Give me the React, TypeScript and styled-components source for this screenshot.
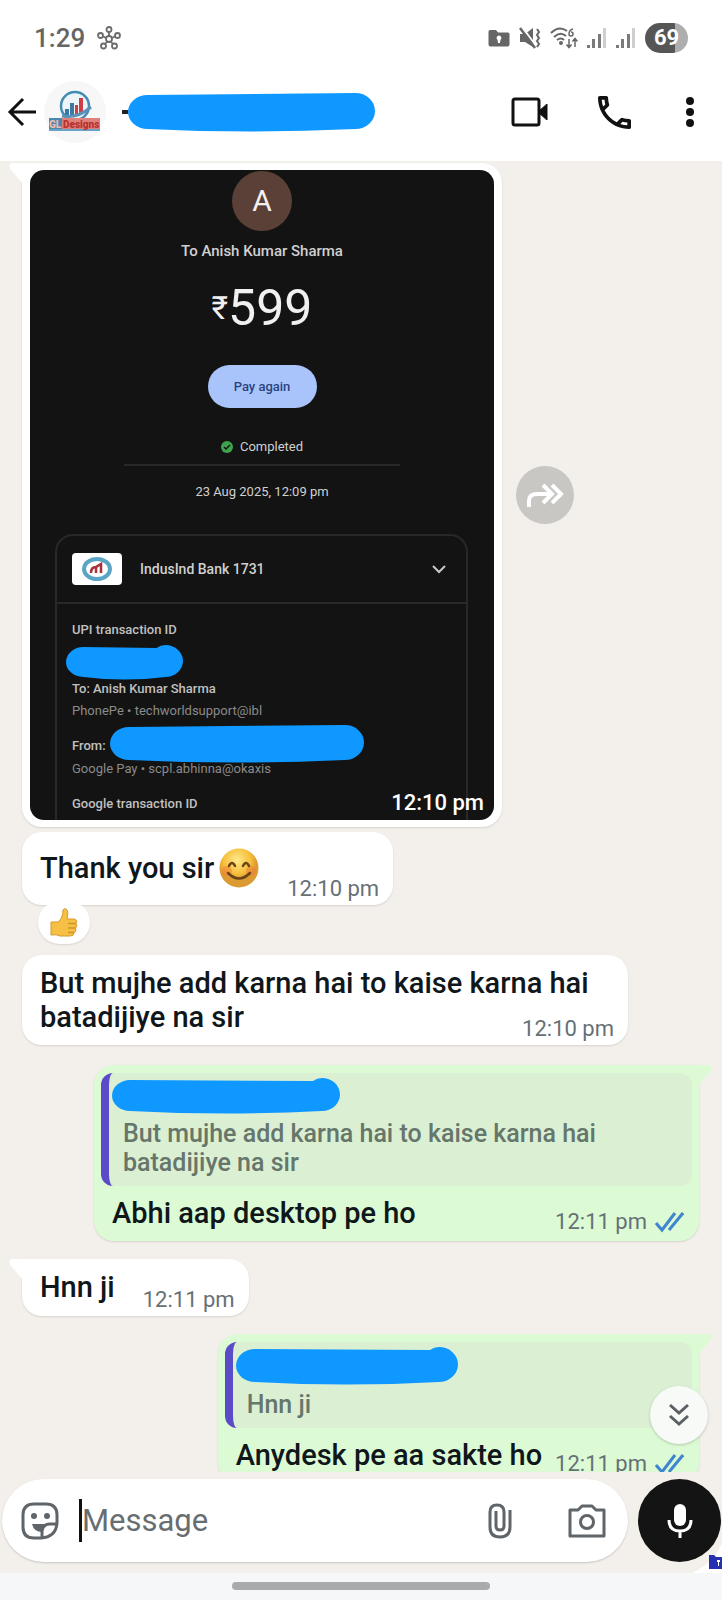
import React from 'react';
import styled, { createGlobalStyle, css } from 'styled-components';
import { MdOutlineCall } from 'react-icons/md';

const Global = createGlobalStyle`
  * { box-sizing: border-box; }
  body { margin: 0; background: #f3f0eb; font-family: Roboto, "Liberation Sans", sans-serif; }
  button, input { font: inherit; }
`;

const Screen = styled.div`
  display: flex;
  flex-direction: column;
  height: 100vh;
  overflow: hidden;
  background: #f3f0eb;
`;

const StatusBar = styled.div`
  display: flex;
  align-items: center;
  height: 75px;
  padding: 0 34px;
  background: #fff;
  color: #666;
`;

const Clock = styled.time`
  margin-right: 12px;
  font-size: 26px;
  font-weight: 500;
`;

const StatusIcons = styled.div`
  display: flex;
  align-items: center;
  gap: 9px;
  margin-left: auto;
`;

const Battery = styled.div`
  display: flex;
  align-items: center;
  justify-content: center;
  width: 43px;
  height: 30px;
  border-radius: 15px;
  background: linear-gradient(90deg, #565656 69%, #aeaeae 69%);
  color: #fff;
  font-size: 22px;
  font-weight: 700;
`;

const Header = styled.header`
  display: flex;
  align-items: center;
  height: 86px;
  padding: 0 22px 12px 6px;
  background: #fff;
  color: #111;
`;

const IconButton = styled.button`
  display: flex;
  align-items: center;
  justify-content: center;
  padding: 0;
  border: 0;
  background: none;
  color: inherit;
  cursor: pointer;
`;

const Contact = styled.div`
  display: flex;
  align-items: center;
  flex: 1;
  margin-left: 6px;
`;

const ContactName = styled.div`
  display: flex;
  align-items: center;
  margin-left: 16px;
`;

const Dash = styled.span`
  width: 6px;
  height: 4px;
  background: #222;
`;

const HeaderActions = styled.div`
  display: flex;
  align-items: center;
  gap: 49px;
`;

const ChatArea = styled.main`
  position: relative;
  flex: 1;
  min-height: 0;
  overflow: hidden;
`;

const Messages = styled.div`
  display: flex;
  flex-direction: column;
  padding: 2px 23px 0 22px;
`;

const Row = styled.div<{ $gap: number; $out?: boolean }>`
  display: flex;
  align-items: center;
  gap: 14px;
  justify-content: ${p => (p.$out ? 'flex-end' : 'flex-start')};
  margin-top: ${p => p.$gap}px;
`;

const Bubble = styled.div<{ $out?: boolean; $tail?: boolean }>`
  position: relative;
  border-radius: 20px;
  background: ${p => (p.$out ? '#dcfbd5' : '#fff')};
  box-shadow: 0 1px 2px rgba(0, 0, 0, 0.12);
  color: #10171b;
  ${p => p.$tail && css`
    border-top-${p.$out ? 'right' : 'left'}-radius: 0;
    &::before {
      content: '';
      position: absolute;
      top: 0;
      ${p.$out ? 'left' : 'right'}: 100%;
      width: 13px;
      height: 20px;
      background: inherit;
      clip-path: ${p.$out
        ? 'polygon(0 0, 80% 0, 100% 12%, 90% 30%, 0 100%)'
        : 'polygon(100% 0, 20% 0, 0 12%, 10% 30%, 100% 100%)'};
    }
  `}
`;

const MediaBubble = styled(Bubble)`
  width: 480px;
  padding: 7px 8px;
`;

const TextBubble = styled(Bubble)<{ $wide?: boolean; $tall?: boolean }>`
  display: flex;
  align-items: flex-end;
  gap: 28px;
  padding: ${p => (p.$tall ? 16 : 11)}px 14px 3px 18px;
  ${p => p.$wide && css`width: 606px;`}
`;

const ReplyBubble = styled(Bubble)<{ $wide?: boolean }>`
  padding: 8px 7px 6px;
  ${p => p.$wide && css`width: 605px;`}
`;

const Body = styled.p<{ $below: number }>`
  display: flex;
  align-items: center;
  gap: 5px;
  margin: 0;
  padding-bottom: ${p => p.$below}px;
  font-size: 29px;
  font-weight: 500;
  line-height: 34px;
`;

const WrappedBody = styled(Body)`
  display: flow-root;
  flex: 1;
`;

const Stamp = styled.span<{ $light?: boolean }>`
  display: flex;
  align-items: center;
  gap: 8px;
  color: ${p => (p.$light ? '#fff' : '#667075')};
  font-size: 22px;
  font-weight: ${p => (p.$light ? 500 : 400)};
  line-height: 26px;
  white-space: nowrap;
`;

const FloatStamp = styled(Stamp)`
  float: right;
  margin-top: 16px;
`;

const ReplyFooter = styled.div`
  display: flex;
  align-items: flex-end;
  justify-content: space-between;
  gap: 13px;
  padding: 10px 8px 0 11px;
`;

const Quote = styled.blockquote`
  margin: 0;
  padding: 5px 20px 9px 14px;
  border-left: 8px solid #5a4bc8;
  border-radius: 12px;
  background: #dbf0d3;
  color: #66766b;
  font-size: 25px;
  font-weight: 500;
  line-height: 29px;
`;

const QuoteText = styled.p`
  margin: 5px 0 0;
`;

const Redaction = styled.svg`
  display: block;
  flex: none;
  fill: #0f98ff;
`;

const QuoteName = styled.div`
  margin-left: -11px;
`;

const Reaction = styled.span`
  display: flex;
  align-items: center;
  justify-content: center;
  z-index: 1;
  width: 52px;
  height: 43px;
  margin: -4px 0 0 16px;
  border-radius: 22px;
  background: #fff;
  box-shadow: 0 1px 2px rgba(0, 0, 0, 0.12);
`;

const Receipt = styled.section`
  position: relative;
  display: flex;
  flex-direction: column;
  align-items: center;
  height: 650px;
  overflow: hidden;
  border-radius: 14px;
  background: #131313;
  color: #d0d0d0;
  font-size: 13px;
  line-height: 18px;
`;

const Payee = styled.div`
  display: flex;
  align-items: center;
  justify-content: center;
  flex: none;
  width: 60px;
  height: 60px;
  margin-top: 1px;
  border-radius: 50%;
  background: #5b4037;
  color: #f5f0ee;
  font-size: 30px;
`;

const PayeeName = styled.div`
  margin-top: 11px;
  font-size: 15px;
  font-weight: 500;
`;

const Amount = styled.div`
  display: flex;
  align-items: center;
  margin-top: 24px;
  color: #f0f0f0;
  font-size: 50px;
  line-height: 48px;
`;

const Rupee = styled.span`
  font-size: 32px;
`;

const PayAgain = styled.button`
  flex: none;
  width: 109px;
  height: 43px;
  margin-top: 33px;
  padding: 0;
  border: 0;
  border-radius: 22px;
  background: #a9c4fb;
  color: #29437f;
  font-size: 13px;
  font-weight: 500;
`;

const Completed = styled.div`
  display: flex;
  align-items: center;
  gap: 7px;
  width: 276px;
  justify-content: center;
  margin-top: 30px;
  padding-bottom: 8px;
  border-bottom: 2px solid #282828;
`;

const Paid = styled.div`
  margin-top: 17px;
`;

const Details = styled.div`
  align-self: stretch;
  flex: 1;
  min-height: 0;
  margin: 33px 26px 0 25px;
  border: 2px solid #282828;
  border-bottom: 0;
  border-radius: 18px 18px 0 0;
`;

const BankRow = styled.div`
  display: flex;
  align-items: center;
  height: 68px;
  padding: 0 20px 0 15px;
  border-bottom: 2px solid #282828;
`;

const BankLogo = styled.svg`
  margin-right: 18px;
  border-radius: 4px;
  background: #fff;
`;

const BankName = styled.span`
  flex: 1;
  font-size: 14px;
  font-weight: 500;
`;

const Facts = styled.div`
  display: flex;
  flex-direction: column;
  padding: 17px 15px 0;
`;

const Fact = styled.div<{ $gap?: number; $dim?: boolean }>`
  display: flex;
  align-items: center;
  height: 18px;
  margin-top: ${p => p.$gap || 0}px;
  color: ${p => (p.$dim ? '#8a8a8a' : '#c0c0c0')};
  font-weight: ${p => (p.$dim ? 400 : 500)};
`;

const IdMask = styled.div`
  margin: 6px 0 0 -6px;
`;

const FromMask = styled.div`
  flex: none;
  margin: 0 0 4px 4px;
`;

const MediaStamp = styled(Stamp)`
  position: absolute;
  right: 10px;
  bottom: 4px;
`;

const Forward = styled(IconButton)`
  width: 58px;
  height: 58px;
  border-radius: 50%;
  background: #c8c7c4;
  color: #fff;
`;

const ScrollDown = styled(IconButton)`
  position: absolute;
  right: 14px;
  bottom: 28px;
  width: 58px;
  height: 58px;
  border-radius: 50%;
  background: #f8faf8;
  box-shadow: 0 1px 3px rgba(0, 0, 0, 0.2);
  color: #5b6063;
`;

const Composer = styled.form`
  position: relative;
  display: flex;
  align-items: center;
  gap: 10px;
  height: 101px;
  padding: 0 1px 4px 2px;
`;

const Field = styled.div`
  display: flex;
  align-items: center;
  flex: 1;
  min-width: 0;
  height: 83px;
  padding: 0 22px 0 19px;
  border-radius: 42px;
  background: #fff;
  box-shadow: 0 1px 2px rgba(0, 0, 0, 0.18);
  color: #5f6569;
`;

const Caret = styled.span`
  width: 3px;
  height: 43px;
  margin-left: 20px;
  background: #111;
`;

const Input = styled.input`
  flex: 1;
  min-width: 0;
  padding: 0;
  border: 0;
  outline: 0;
  background: none;
  font-size: 31px;
  &::placeholder { color: #686d71; opacity: 1; }
`;

const FieldActions = styled.div`
  display: flex;
  align-items: center;
  gap: 56px;
`;

const Mic = styled(IconButton)`
  width: 83px;
  height: 83px;
  border-radius: 50%;
  background: #141414;
  color: #fff;
`;

const CornerBadge = styled.svg`
  position: absolute;
  right: 0;
  bottom: 0;
`;

const GestureBar = styled.footer`
  display: flex;
  justify-content: center;
  height: 27px;
  padding-top: 9px;
  background: #f5f7f9;
`;

const Handle = styled.span`
  width: 258px;
  height: 8px;
  border-radius: 4px;
  background: #a9aaab;
`;

const Mask = ({ w, h, bump = true }: { w: number; h: number; bump?: boolean }) => {
  const r = h / 2;
  const top = bump ? `L${w - r - 9} 3 Q${w - r - 5} 0 ${w - r} 0` : `L${w - r} 0`;
  return (
    <Redaction width={w} height={h} role="img" aria-label="Hidden">
      <path d={`M${r} 2 ${top} A${r} ${(h - 3) / 2} 0 0 1 ${w - r} ${h - 3} Q${w / 2} ${h + 2} ${r} ${h - 3} A${r} ${(h - 5) / 2} 0 0 1 ${r} 2Z`} />
    </Redaction>
  );
};

const Ticks = () => (
  <svg width="29" height="22" viewBox="0 0 29 22" fill="none" stroke="#3f86cf" strokeWidth="3">
    <path d="M1 12 L7 19 L20 2" />
    <path d="M14 19 L28 2" />
  </svg>
);

const Signal = () => (
  <svg width="20" height="20" viewBox="0 0 20 20">
    <g fill="#7a7a7a">
      <rect x="0" y="17" width="3" height="3" />
      <rect x="5" y="11" width="3" height="9" />
      <rect x="11" y="6" width="3" height="14" />
    </g>
    <rect x="16" y="0" width="3" height="20" fill="#cfcfcf" />
  </svg>
);

export default function App() {
  return (
    <>
      <Global />
      <Screen>
        <StatusBar>
          <Clock>1:29</Clock>
          <svg width="24" height="24" viewBox="0 0 24 24" fill="none" stroke="#6c6c6c" strokeWidth="1.800">
            <circle cx="12" cy="13" r="3" />
            <circle cx="12" cy="3.500" r="2.500" /><circle cx="3.500" cy="9.500" r="2.500" /><circle cx="20.500" cy="9.500" r="2.500" />
            <circle cx="6.500" cy="20" r="2.500" /><circle cx="17.500" cy="20" r="2.500" />
            <path d="M12 6V10M6 10.300 9 12M18 10.300 15 12M8 18 10.300 15.500M16 18 13.700 15.500" />
          </svg>
          <StatusIcons>
            <svg width="22" height="18" viewBox="0 0 22 18">
              <path fill="#666" d="M2 1H8L10 3.500H20Q21.500 3.500 21.500 5V15.500Q21.500 17.500 19.500 17.500H2.500Q.5 17.500 .5 15.500V3Q.5 1 2 1Z" />
              <path fill="#fff" d="M11 6.500a2.500 2.500 0 0 1 1.400 4.500L12 14H10L9.600 11A2.500 2.500 0 0 1 11 6.500Z" />
            </svg>
            <svg width="22" height="22" viewBox="0 0 22 22">
              <path fill="#666" d="M1 7H6L14 1V20L6 15H1Z" />
              <path d="M3 0 18 20" stroke="#fff" strokeWidth="2" />
              <path d="M1 1 16 21" stroke="#666" strokeWidth="2.500" />
              <path d="M18 2l2 3-2 3 2 3-2 3 2 3-2 3" fill="none" stroke="#666" strokeWidth="2" />
            </svg>
            <svg width="28" height="22" viewBox="0 0 28 22" fill="none" stroke="#666" strokeWidth="2">
              <path d="M1 6Q9-2 17 4M4 10Q10 4 16 9M7 13Q11 10 14 13" />
              <circle cx="11" cy="16" r="1" />
              <path d="M23 2Q19 3 19 7a2 2 0 1 0 2-2" strokeWidth="1.500" />
              <path d="M19 12V20M16.500 17.500 19 20.500 21.500 17.500M25 20V12M22.500 14.500 25 11.500 27.500 14.500" strokeWidth="1.500" />
            </svg>
            <Signal />
            <Signal />
            <Battery>69</Battery>
          </StatusIcons>
        </StatusBar>

        <Header>
          <IconButton aria-label="Back">
            <svg width="32" height="30" viewBox="0 0 32 30" fill="none" stroke="#111" strokeWidth="3">
              <path d="M17 2 4 15 17 28M4 15H30" />
            </svg>
          </IconButton>
          <Contact>
            <svg width="62" height="62" viewBox="0 0 62 62" role="img" aria-label="Contact photo">
              <circle cx="31" cy="31" r="31" fill="#f8f7f7" />
              <circle cx="31" cy="25" r="14" fill="#edf5f8" stroke="#438cb4" strokeWidth="2.500" />
              <path fill="#3d78a5" d="M21 28h4v8h-4zM26 22h4v13h-4z" />
              <path fill="#cc3f47" d="M31 24h3v10h-3zM35 17h4v16h-4z" />
              <path d="M18 35Q33 38 47 26" fill="none" stroke="#5d91b8" strokeWidth="3" />
              <rect x="5" y="37" width="51" height="12" fill="#e0807a" />
              <rect x="5" y="37" width="13" height="12" fill="#4a88ae" />
              <path d="M5 49H56" stroke="#6aa3c4" strokeWidth="2" />
              <text x="5" y="47" fontFamily="Roboto" fontSize="10" fontWeight="900" fill="#f0b9b2">GL</text>
              <text x="19" y="47" fontFamily="Roboto" fontSize="10" fontWeight="900" fill="#b8322f">Designs</text>
            </svg>
            <ContactName>
              <Dash />
              <Mask w={247} h={39} bump={false} />
            </ContactName>
          </Contact>
          <HeaderActions>
            <IconButton aria-label="Video call">
              <svg width="38" height="30" viewBox="0 0 38 30">
                <rect x="2" y="2" width="26" height="26" rx="2" fill="none" stroke="#111" strokeWidth="3" />
                <path d="M28 14 36 7V23L28 16Z" fill="#111" stroke="#111" />
              </svg>
            </IconButton>
            <IconButton aria-label="Voice call">
              <MdOutlineCall size={33} viewBox="3 3 18 18" />
            </IconButton>
            <IconButton aria-label="More options">
              <svg width="20" height="30" viewBox="0 0 20 30" fill="#111">
                <circle cx="10" cy="4" r="4" /><circle cx="10" cy="15" r="4" /><circle cx="10" cy="26" r="4" />
              </svg>
            </IconButton>
          </HeaderActions>
        </Header>

        <ChatArea>
          <Messages>
            <Row $gap={0}>
              <MediaBubble $tail>
                <Receipt>
                  <Payee>A</Payee>
                  <PayeeName>To Anish Kumar Sharma</PayeeName>
                  <Amount><Rupee>₹</Rupee>599</Amount>
                  <PayAgain type="button">Pay again</PayAgain>
                  <Completed>
                    <svg width="12" height="12" viewBox="0 0 12 12">
                      <circle cx="6" cy="6" r="6" fill="#3fa34d" />
                      <path d="M3 6 5 8 9 4" fill="none" stroke="#131313" strokeWidth="1.500" />
                    </svg>
                    Completed
                  </Completed>
                  <Paid>23 Aug 2025, 12:09 pm</Paid>
                  <Details>
                    <BankRow>
                      <BankLogo width="50" height="32" viewBox="0 0 50 32" role="img" aria-label="Bank logo">
                        <ellipse cx="25" cy="16" rx="13" ry="10" fill="#fff" stroke="#5aa5c5" strokeWidth="4" />
                        <path d="M19 20Q19 14 24 14L29 11V20M24 14V20" fill="none" stroke="#a8323c" strokeWidth="2.500" />
                      </BankLogo>
                      <BankName>IndusInd Bank 1731</BankName>
                      <svg width="14" height="10" viewBox="0 0 14 10" fill="none" stroke="#c8c8c8" strokeWidth="2">
                        <path d="M1 2 7 8 13 2" />
                      </svg>
                    </BankRow>
                    <Facts>
                      <Fact>UPI transaction ID</Fact>
                      <IdMask><Mask w={117} h={35} /></IdMask>
                      <Fact>To: Anish Kumar Sharma</Fact>
                      <Fact $gap={4} $dim>PhonePe • techworldsupport@ibl</Fact>
                      <Fact $gap={17}>From:<FromMask><Mask w={254} h={38} bump={false} /></FromMask></Fact>
                      <Fact $gap={5} $dim>Google Pay • scpl.abhinna@okaxis</Fact>
                      <Fact $gap={17}>Google transaction ID</Fact>
                    </Facts>
                  </Details>
                  <MediaStamp $light>12:10 pm</MediaStamp>
                </Receipt>
              </MediaBubble>
              <Forward aria-label="Forward">
                <svg width="38" height="28" viewBox="0 0 38 28" fill="none" stroke="#fff" strokeWidth="4">
                  <path d="M3 26V20Q3 13 11 13H24M17 4 26 13 17 22M26 4 35 13 26 22" />
                </svg>
              </Forward>
            </Row>

            <Row $gap={5}>
              <TextBubble $tall>
                <Body $below={14}>
                  Thank you sir
                  <svg width="40" height="40" viewBox="0 0 40 40" role="img" aria-label="Smiling face">
                    <defs><radialGradient id="face" cx="45%" cy="30%"><stop offset="0" stopColor="#ffe98a" /><stop offset=".7" stopColor="#f6bf3c" /><stop offset="1" stopColor="#dc9a33" /></radialGradient></defs>
                    <circle cx="20" cy="20" r="19.500" fill="url(#face)" />
                    <circle cx="8" cy="23" r="5" fill="#f2793a" opacity=".5" /><circle cx="32" cy="23" r="5" fill="#f2793a" opacity=".5" />
                    <path d="M10 18q3-6 6 0M24 18q3-6 6 0M9 25q11 11 22 0" fill="none" stroke="#6b4417" strokeWidth="2.500" strokeLinecap="round" />
                  </svg>
                </Body>
                <Stamp>12:10 pm</Stamp>
              </TextBubble>
            </Row>
            <Reaction>
              <svg width="28" height="30" viewBox="0 0 28 30" role="img" aria-label="Thumbs up">
                <path d="M1 14H8Q13 10 13 2 14 0 16 1 19 3 17 11H25Q28 13 26 15.500 28 18 25.500 20 27 23 24 25 24 28 20 28H10Q7 26 1 27Z" fill="#f6c044" stroke="#d59a2c" />
                <path d="M18 15.500H26M18 20H25.500M18 24.500H24" stroke="#cf922c" strokeWidth="1.500" />
              </svg>
            </Reaction>

            <Row $gap={11}>
              <TextBubble $wide>
                <WrappedBody $below={0}>
                  But mujhe add karna hai to kaise karna hai batadijiye na sir
                  <FloatStamp>12:10 pm</FloatStamp>
                </WrappedBody>
              </TextBubble>
            </Row>

            <Row $gap={20} $out>
              <ReplyBubble $out $tail $wide>
                <Quote>
                  <QuoteName><Mask w={228} h={36} /></QuoteName>
                  <QuoteText>But mujhe add karna hai to kaise karna hai<br />batadijiye na sir</QuoteText>
                </Quote>
                <ReplyFooter>
                  <Body $below={5}>Abhi aap desktop pe ho</Body>
                  <Stamp>12:11 pm <Ticks /></Stamp>
                </ReplyFooter>
              </ReplyBubble>
            </Row>

            <Row $gap={18}>
              <TextBubble $tail>
                <Body $below={9}>Hnn ji</Body>
                <Stamp>12:11 pm</Stamp>
              </TextBubble>
            </Row>

            <Row $gap={18} $out>
              <ReplyBubble $out $tail>
                <Quote>
                  <QuoteName><Mask w={222} h={38} /></QuoteName>
                  <QuoteText>Hnn ji</QuoteText>
                </Quote>
                <ReplyFooter>
                  <Body $below={5}>Anydesk pe aa sakte ho</Body>
                  <Stamp>12:11 pm <Ticks /></Stamp>
                </ReplyFooter>
              </ReplyBubble>
            </Row>
          </Messages>
          <ScrollDown aria-label="Scroll to latest">
            <svg width="20" height="24" viewBox="0 0 20 24" fill="none" stroke="#5b6063" strokeWidth="3">
              <path d="M1 2 10 10 19 2M1 13 10 21 19 13" />
            </svg>
          </ScrollDown>
        </ChatArea>

        <Composer onSubmit={e => e.preventDefault()}>
          <Field>
            <IconButton type="button" aria-label="Stickers">
              <svg width="38" height="38" viewBox="0 0 38 38" fill="none" stroke="#5f6569" strokeWidth="3">
                <path d="M13 2H25Q36 2 36 13V21Q35 35 20 36H13Q2 36 2 25V13Q2 2 13 2Z" />
                <path d="M21 36V29Q22 22 29 22H36" />
                <path d="M11 22H27Q21 24 21 30 13 30 11 22Z" fill="#5f6569" stroke="none" />
                <circle cx="13" cy="14" r="3" fill="#5f6569" stroke="none" /><circle cx="26" cy="14" r="3" fill="#5f6569" stroke="none" />
              </svg>
            </IconButton>
            <Caret />
            <Input aria-label="Message" placeholder="Message" />
            <FieldActions>
              <IconButton type="button" aria-label="Attach">
                <svg width="24" height="36" viewBox="0 0 24 36" fill="none" stroke="#5f6569" strokeWidth="3">
                  <path d="M22 7V24Q22 34 12 34 2 34 2 24V9Q2 2 9 2 16 2 16 9V23Q16 27 12 27 8 27 8 23V8" />
                </svg>
              </IconButton>
              <IconButton type="button" aria-label="Camera">
                <svg width="38" height="34" viewBox="0 0 38 34" fill="none" stroke="#5f6569" strokeWidth="3" strokeLinejoin="round">
                  <path d="M2 6H10L14 2H24L28 6H36V32H2Z" /><circle cx="19" cy="18" r="6.500" />
                </svg>
              </IconButton>
            </FieldActions>
          </Field>
          <Mic type="button" aria-label="Record voice message">
            <svg width="26" height="36" viewBox="0 0 26 36" fill="none" stroke="#fff" strokeWidth="3">
              <rect x="7" y="1" width="12" height="22" rx="6" fill="#fff" stroke="none" />
              <path d="M2 17Q2 28 13 28 24 28 24 17M13 28V35" />
            </svg>
          </Mic>
          <CornerBadge width="30" height="30" viewBox="0 0 30 30">
            <path d="M30 0Q22 20 0 30H30Z" fill="#fff" />
            <path d="M17 12H22L24 14H30V26H17Z" fill="#2531b0" /><path d="M25 17h3v2h-1v4h-1v-4h-1z" fill="#fff" />
          </CornerBadge>
        </Composer>
        <GestureBar><Handle /></GestureBar>
      </Screen>
    </>
  );
}
